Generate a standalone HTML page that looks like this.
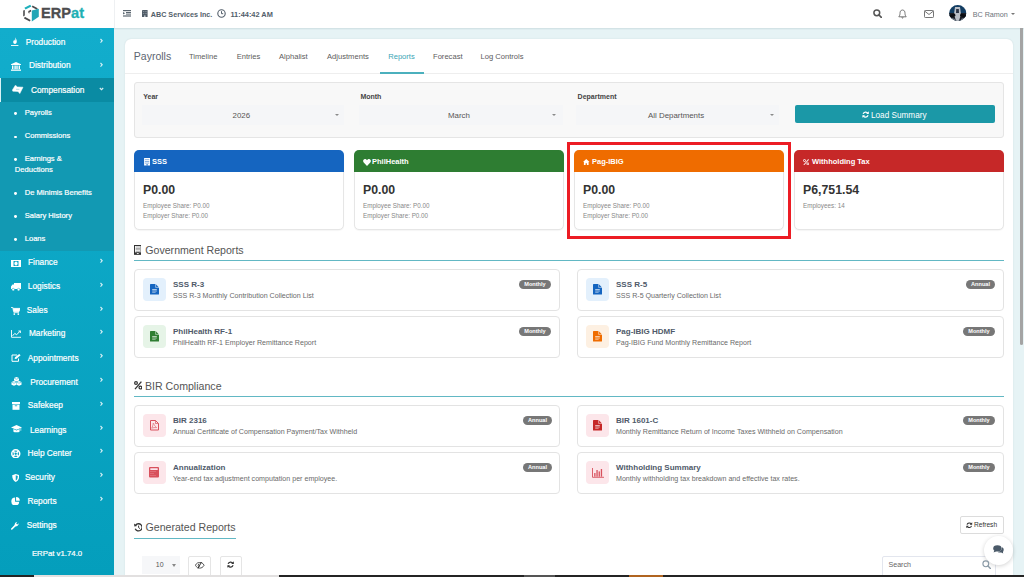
<!DOCTYPE html>
<html><head><meta charset="utf-8">
<style>
*{margin:0;padding:0;box-sizing:border-box}
html,body{width:1024px;height:577px;overflow:hidden;background:#e6f3f5;font-family:"Liberation Sans",sans-serif}
.a{position:absolute}
.t{position:absolute;white-space:nowrap;line-height:20px;height:20px}
#top{left:0;top:0;width:1024px;height:28px;background:#fff;box-shadow:0 1px 1.5px rgba(40,80,90,.13)}
#side{left:0;top:28px;width:114px;height:549px;background:linear-gradient(#12adcc,#049ebc)}
.mi{position:absolute;white-space:nowrap;line-height:20px;height:20px;color:#fff;font-size:8.3px;-webkit-text-stroke:0.2px #fff}
.si{position:absolute;white-space:nowrap;line-height:20px;height:20px;color:#fff;font-size:7.6px;-webkit-text-stroke:0.2px #fff}
.chev{position:absolute;left:98px;width:5px;height:8px}
.ic{position:absolute}
#card{left:125px;top:39px;width:888px;height:560px;background:#fff;border-radius:6px;box-shadow:0 0 1.5px rgba(60,90,100,.18)}
.tab{position:absolute;top:46.5px;white-space:nowrap;line-height:20px;height:20px;font-size:7.6px;color:#5c5c5c}
.lbl{position:absolute;white-space:nowrap;line-height:20px;height:20px;font-size:7px;font-weight:bold;color:#444}
.sel{position:absolute;top:105px;height:20px;background:#f5f6f8}
.selt{position:absolute;white-space:nowrap;line-height:19px;top:0.7px;font-size:7.9px;color:#555}
.caret{position:absolute;top:9px;width:0;height:0;border-left:2px solid transparent;border-right:2px solid transparent;border-top:2.5px solid #8a8a8a}
.sc{position:absolute;top:150px;width:210px;height:80px;background:#fff;border:1px solid #e6e6e6;border-radius:5px;box-shadow:0 1px 1px rgba(0,0,0,.04)}
.sch{position:absolute;left:-1px;top:-1px;width:210px;height:22px;border-radius:5px 5px 0 0}
.scht{position:absolute;left:17px;top:1px;line-height:20px;color:#fff;font-weight:bold;font-size:7.5px;white-space:nowrap}
.amt{position:absolute;left:8px;top:29px;line-height:20px;font-weight:bold;font-size:12.3px;color:#333;white-space:nowrap}
.sub{position:absolute;left:8px;line-height:10px;font-size:6.3px;color:#888;white-space:nowrap}
.h{position:absolute;white-space:nowrap;line-height:20px;height:20px;font-size:10.6px;color:#555}
.hl{position:absolute;height:1px;background:#62b8c4}
.rc{position:absolute;width:426px;height:41.5px;background:#fff;border:1px solid #e3e3e3;border-radius:4px}
.rc.r{width:427px}
.ib{position:absolute;left:8px;top:8px;width:23px;height:23px;border-radius:4px}
.rt{position:absolute;left:38px;top:4.6px;line-height:20px;font-weight:bold;font-size:8px;color:#4f5a6a;white-space:nowrap}
.rs{position:absolute;left:38px;top:16px;line-height:20px;font-size:7.1px;color:#6a6a6a;white-space:nowrap}
.bd{position:absolute;top:10px;height:9px;border-radius:5px;background:#777;color:#fff;font-weight:bold;font-size:5.6px;line-height:9px;text-align:center;white-space:nowrap}
</style></head><body>

<!-- content bg handled by body -->
<div id="top" class="a"></div>
<div class="a" style="left:114px;top:0;width:1px;height:28px;background:#eef0f2"></div>

<!-- logo -->
<svg class="ic" style="left:22px;top:3px" width="18" height="20" viewBox="0 0 18 20"><path d="M2.4 4.8 L8.2 1.8 L9.4 3.6 L3.5 6.4 Z" fill="#1fb0bb"/><path d="M10.6 2.5 L15.7 5.2 L14.9 6.8 L9.8 4 Z" fill="#4a4a4c"/><path d="M1.2 7.5 L2.8 7 L2.8 12.6 L1.2 13.4 Z" fill="#4a4a4c"/><path d="M2.8 13.8 L8.6 16.9 L7.8 18.5 L2 15.4 Z" fill="#4a4a4c"/><path d="M6.3 7.9 L9 6.8 L9.2 8.4 L7.4 9.2 L7.6 10.4 L6.4 10 Z" fill="#4a4a4c"/><path d="M9.8 7.5 L16.8 5.8 L16.8 13.8 L9.8 18.5 Z" fill="#23a6b6"/></svg>
<div class="t" style="left:41px;top:3px;font-size:14.6px;font-weight:bold;color:#4d4d4f;-webkit-text-stroke:0.3px #4d4d4f">ERP<span style="color:#1fb0b4;-webkit-text-stroke:0.3px #1fb0b4">at</span></div>

<!-- top bar left -->
<svg class="ic" style="left:123px;top:10px" width="8" height="6.6" viewBox="0 0 8 6.6"><g fill="#5b6670"><rect x="0" y="0" width="8" height="1.2"/><rect x="3" y="2" width="5" height="1"/><rect x="3" y="3.6" width="5" height="1"/><rect x="0" y="5.4" width="8" height="1.2"/><path d="M0 2 L2.2 3.3 L0 4.6 Z"/></g></svg>
<svg class="ic" style="left:142.4px;top:10px" width="5.6" height="7.4" viewBox="0 0 5.6 7.4"><rect x="0" y="0" width="5.6" height="7.4" rx="0.4" fill="#505c68"/><g fill="#8a949e"><rect x="0.9" y="1.1" width="1.4" height="0.9"/><rect x="3.3" y="1.1" width="1.4" height="0.9"/><rect x="0.9" y="3" width="1.4" height="0.9"/><rect x="3.3" y="3" width="1.4" height="0.9"/></g><rect x="2.1" y="5.4" width="1.4" height="2" fill="#c8ced4"/></svg>
<div class="t" style="left:150.8px;top:4.5px;font-size:7.2px;font-weight:bold;color:#525e6a">ABC Services Inc.</div>
<svg class="ic" style="left:217px;top:9px" width="9" height="9" viewBox="0 0 9 9"><circle cx="4.5" cy="4.5" r="3.7" fill="none" stroke="#525e6a" stroke-width="1.1"/><path d="M4.5 2.2 V4.7 H6.2" fill="none" stroke="#525e6a" stroke-width="1"/></svg>
<div class="t" style="left:230.4px;top:4.5px;font-size:7.4px;font-weight:bold;color:#525e6a">11:44:42 AM</div>

<!-- top bar right -->
<svg class="ic" style="left:873px;top:9px" width="9" height="9" viewBox="0 0 9 9"><circle cx="3.8" cy="3.8" r="2.9" fill="none" stroke="#555" stroke-width="1.5"/><path d="M6 6 L8.3 8.3" stroke="#555" stroke-width="1.7" stroke-linecap="round"/></svg>
<svg class="ic" style="left:898px;top:9px" width="9" height="10" viewBox="0 0 9 10"><path d="M4.5 1 C2.5 1 2 2.8 2 4.5 C2 6.5 1 7.3 0.8 7.8 H8.2 C8 7.3 7 6.5 7 4.5 C7 2.8 6.5 1 4.5 1 Z" fill="none" stroke="#666" stroke-width="0.9"/><path d="M3.6 8.6 A1 1 0 0 0 5.4 8.6" fill="#666" stroke="#666" stroke-width="0.6"/></svg>
<svg class="ic" style="left:924px;top:10px" width="10" height="8" viewBox="0 0 10 8"><rect x="0.5" y="0.5" width="9" height="7" rx="0.8" fill="none" stroke="#666" stroke-width="0.9"/><path d="M0.8 1.2 L5 4.5 L9.2 1.2" fill="none" stroke="#666" stroke-width="0.9"/></svg>
<svg class="ic" style="left:949px;top:5px" width="17.5" height="16" viewBox="0 0 17.5 16"><defs><clipPath id="av"><ellipse cx="8.75" cy="8" rx="8.6" ry="7.9"/></clipPath></defs><g clip-path="url(#av)"><rect x="0" y="0" width="17.5" height="16" fill="#123d62"/><rect x="0" y="8" width="17.5" height="8" fill="#1c1f26"/><path d="M6 2 L11 2 L12 9 L10 16 L7 16 L5 9 Z" fill="#b9bec6"/><path d="M7.2 4 L9.8 4 L10 8 L7 8 Z" fill="#2a3344"/><path d="M0 10 L6 8.5 L6.5 11 L0 13 Z M17.5 10 L11.5 8.5 L11 11 L17.5 13 Z" fill="#0b0d12"/><path d="M2 13 L6 14 L5 16 L1 16 Z M15 13 L12 14 L13 16 L16 16 Z" fill="#8d97a6"/></g></svg>
<div class="t" style="left:972.7px;top:4.5px;font-size:7.2px;color:#6c737b">BC Ramon</div>
<div class="a" style="left:1011px;top:13px;width:0;height:0;border-left:2.3px solid transparent;border-right:2.3px solid transparent;border-top:2.6px solid #777"></div>

<!-- sidebar -->
<div id="side" class="a"></div>
<div class="a" style="left:0;top:78px;width:114px;height:24px;background:#0a8ba3"></div>
<div class="a" style="left:0;top:78px;width:1px;height:24px;background:#d9f2f6"></div>
<div class="a" style="left:0;top:102px;width:114px;height:149px;background:#1299b3"></div>

<div class="mi" style="left:25.7px;top:31.5px">Production</div>
<div class="mi" style="left:29px;top:55.4px">Distribution</div>
<div class="mi" style="left:30.9px;top:79.7px">Compensation</div>
<div class="si" style="left:24.8px;top:102.6px">Payrolls</div>
<div class="si" style="left:24.7px;top:126px">Commissions</div>
<div class="si" style="left:24.7px;top:148.7px">Earnings &amp;</div>
<div class="si" style="left:14.8px;top:160.2px">Deductions</div>
<div class="si" style="left:24.7px;top:183px">De Minimis Benefits</div>
<div class="si" style="left:24.7px;top:205.7px">Salary History</div>
<div class="si" style="left:24.7px;top:229px">Loans</div>
<div class="mi" style="left:28px;top:252.2px">Finance</div>
<div class="mi" style="left:27.8px;top:275.7px">Logistics</div>
<div class="mi" style="left:26.8px;top:299.9px">Sales</div>
<div class="mi" style="left:28.9px;top:323.3px">Marketing</div>
<div class="mi" style="left:27.8px;top:347.5px">Appointments</div>
<div class="mi" style="left:30.2px;top:371.7px">Procurement</div>
<div class="mi" style="left:27.8px;top:395px">Safekeep</div>
<div class="mi" style="left:30px;top:419.5px">Learnings</div>
<div class="mi" style="left:27.5px;top:442.7px">Help Center</div>
<div class="mi" style="left:25px;top:467.2px">Security</div>
<div class="mi" style="left:27.5px;top:491.2px">Reports</div>
<div class="mi" style="left:26.7px;top:514.8px">Settings</div>
<div class="si" style="left:31.9px;top:544.3px;font-size:7.8px">ERPat v1.74.0</div>

<!-- bullets -->
<div class="a" style="left:14.4px;top:112.2px;width:2.8px;height:2.8px;border-radius:50%;background:#fff"></div>
<div class="a" style="left:14.4px;top:135.6px;width:2.8px;height:2.8px;border-radius:50%;background:#fff"></div>
<div class="a" style="left:14.4px;top:158.2px;width:2.8px;height:2.8px;border-radius:50%;background:#fff"></div>
<div class="a" style="left:14.4px;top:191.9px;width:2.8px;height:2.8px;border-radius:50%;background:#fff"></div>
<div class="a" style="left:14.4px;top:215.3px;width:2.8px;height:2.8px;border-radius:50%;background:#fff"></div>
<div class="a" style="left:14.4px;top:237.9px;width:2.8px;height:2.8px;border-radius:50%;background:#fff"></div>

<!-- chevrons -->
<svg class="chev" style="top:36.5px;left:99px" viewBox="0 0 5 8"><path d="M1.5 2 L3.2 3.8 L1.5 5.6" fill="none" stroke="#fff" stroke-opacity="0.85" stroke-width="1.1"/></svg>
<svg class="chev" style="top:60.5px;left:99px" viewBox="0 0 5 8"><path d="M1.5 2 L3.2 3.8 L1.5 5.6" fill="none" stroke="#fff" stroke-opacity="0.85" stroke-width="1.1"/></svg>
<svg class="chev" style="top:84.5px;left:99px" viewBox="0 0 5 8"><path d="M0.8 3 L2.5 4.7 L4.2 3" fill="none" stroke="#fff" stroke-opacity="0.85" stroke-width="1.1"/></svg>
<svg class="chev" style="top:257px;left:99px" viewBox="0 0 5 8"><path d="M1.5 2 L3.2 3.8 L1.5 5.6" fill="none" stroke="#fff" stroke-opacity="0.85" stroke-width="1.1"/></svg>
<svg class="chev" style="top:280.5px;left:99px" viewBox="0 0 5 8"><path d="M1.5 2 L3.2 3.8 L1.5 5.6" fill="none" stroke="#fff" stroke-opacity="0.85" stroke-width="1.1"/></svg>
<svg class="chev" style="top:304.5px;left:99px" viewBox="0 0 5 8"><path d="M1.5 2 L3.2 3.8 L1.5 5.6" fill="none" stroke="#fff" stroke-opacity="0.85" stroke-width="1.1"/></svg>
<svg class="chev" style="top:328px;left:99px" viewBox="0 0 5 8"><path d="M1.5 2 L3.2 3.8 L1.5 5.6" fill="none" stroke="#fff" stroke-opacity="0.85" stroke-width="1.1"/></svg>
<svg class="chev" style="top:352px;left:99px" viewBox="0 0 5 8"><path d="M1.5 2 L3.2 3.8 L1.5 5.6" fill="none" stroke="#fff" stroke-opacity="0.85" stroke-width="1.1"/></svg>
<svg class="chev" style="top:376px;left:99px" viewBox="0 0 5 8"><path d="M1.5 2 L3.2 3.8 L1.5 5.6" fill="none" stroke="#fff" stroke-opacity="0.85" stroke-width="1.1"/></svg>
<svg class="chev" style="top:399.5px;left:99px" viewBox="0 0 5 8"><path d="M1.5 2 L3.2 3.8 L1.5 5.6" fill="none" stroke="#fff" stroke-opacity="0.85" stroke-width="1.1"/></svg>
<svg class="chev" style="top:423.5px;left:99px" viewBox="0 0 5 8"><path d="M1.5 2 L3.2 3.8 L1.5 5.6" fill="none" stroke="#fff" stroke-opacity="0.85" stroke-width="1.1"/></svg>
<svg class="chev" style="top:447px;left:99px" viewBox="0 0 5 8"><path d="M1.5 2 L3.2 3.8 L1.5 5.6" fill="none" stroke="#fff" stroke-opacity="0.85" stroke-width="1.1"/></svg>
<svg class="chev" style="top:471px;left:99px" viewBox="0 0 5 8"><path d="M1.5 2 L3.2 3.8 L1.5 5.6" fill="none" stroke="#fff" stroke-opacity="0.85" stroke-width="1.1"/></svg>
<svg class="chev" style="top:495px;left:99px" viewBox="0 0 5 8"><path d="M1.5 2 L3.2 3.8 L1.5 5.6" fill="none" stroke="#fff" stroke-opacity="0.85" stroke-width="1.1"/></svg>


<svg class="ic" style="left:11px;top:37px" width="8" height="9" viewBox="0 0 8 9"><path d="M4 0.3 C5 1.8 5.8 2.6 5.8 4.6 C5.8 6.2 5 7 4 7 C3 7 2.2 6.2 2.2 5 C2.2 3.8 3 3.4 3.2 2.4 C3.8 3 3.9 3.6 3.9 4.2 C4.6 3.2 4.5 1.5 4 0.3 Z" fill="#fff"/><rect x="0" y="8" width="7.4" height="0.9" fill="#fff"/></svg>
<svg class="ic" style="left:11px;top:61.5px" width="10" height="9" viewBox="0 0 10 9"><path d="M5 0 L10 2.2 V3 H0 V2.2 Z" fill="#fff"/><rect x="1" y="3.5" width="1.4" height="3.6" fill="#fff"/><rect x="3.4" y="3.5" width="1.4" height="3.6" fill="#fff"/><rect x="5.3" y="3.5" width="1.4" height="3.6" fill="#fff"/><rect x="7.6" y="3.5" width="1.4" height="3.6" fill="#fff"/><rect x="0" y="7.5" width="10" height="1.3" fill="#fff"/></svg>
<svg class="ic" style="left:12px;top:85px" width="12" height="9" viewBox="0 0 12 9"><path d="M0.4 5 L3.4 0.2 L5.4 1.9 L11 2.2 L7.8 8.6 L6 6.4 L0.8 6.2 Z" fill="#fff" stroke="#fff" stroke-width="0.5" stroke-linejoin="round"/><path d="M4 4.3 H7.4" stroke="#7fc6d4" stroke-width="0.6"/></svg>
<svg class="ic" style="left:11px;top:259.5px" width="10" height="7" viewBox="0 0 10 7"><rect x="0.5" y="0.5" width="9" height="6" fill="none" stroke="#fff" stroke-width="1"/><rect x="0.5" y="0.5" width="2" height="6" fill="#fff"/><rect x="7.5" y="0.5" width="2" height="6" fill="#fff"/><ellipse cx="5" cy="3.5" rx="1.6" ry="2" fill="#fff"/></svg>
<svg class="ic" style="left:11px;top:283px" width="10" height="8" viewBox="0 0 10 8"><path d="M3 0 H10 V6 H3 Z M0 3.5 L1.5 1.6 H3 V6 H0 Z" fill="#fff"/><circle cx="2.2" cy="6.6" r="1.3" fill="#fff" stroke="#0ea5c3" stroke-width="0.5"/><circle cx="7.6" cy="6.6" r="1.3" fill="#fff" stroke="#0ea5c3" stroke-width="0.5"/></svg>
<svg class="ic" style="left:11px;top:306.5px" width="9" height="8" viewBox="0 0 9 8"><path d="M0 0.4 H1.8 L2.6 4.6 H8 L9 1.4 H2.2" fill="none" stroke="#fff" stroke-width="0.9"/><path d="M2 1.4 H9 L8 4.6 H2.6 Z" fill="#fff"/><rect x="2.6" y="5.3" width="5.4" height="0.8" fill="#fff"/><circle cx="3.3" cy="7.1" r="0.9" fill="#fff"/><circle cx="7.3" cy="7.1" r="0.9" fill="#fff"/></svg>
<svg class="ic" style="left:11px;top:330px" width="10" height="8" viewBox="0 0 10 8"><path d="M0.5 0 V7.3 H10" fill="none" stroke="#fff" stroke-width="0.9"/><path d="M1.6 5.8 L3.8 3.4 L5.6 4.8 L9 1.2" fill="none" stroke="#fff" stroke-width="1"/><path d="M7.4 1 H9.4 V3" fill="none" stroke="#fff" stroke-opacity="0.85" stroke-width="1.1"/></svg>
<svg class="ic" style="left:11px;top:353.5px" width="10" height="8" viewBox="0 0 10 8"><path d="M6 1 H1 V7.3 H7.5 V4.5" fill="none" stroke="#fff" stroke-width="1"/><path d="M3.6 4.8 L4 3.2 L8.2 0 L9.6 1.2 L5.2 5 Z" fill="#fff"/></svg>
<svg class="ic" style="left:11px;top:376.8px" width="11" height="9" viewBox="0 0 11 9"><path d="M5.5 0 L8 1 V3.6 L5.5 4.6 L3 3.6 V1 Z" fill="#fff"/><path d="M3 4 L5.4 5 V7.8 L3 8.8 L0.5 7.8 V5 Z" fill="#fff"/><path d="M8 4 L10.5 5 V7.8 L8 8.8 L5.6 7.8 V5 Z" fill="#fff"/><path d="M3 1.2 L5.5 2.2 L8 1.2 M0.5 5.2 L3 6.2 L5.4 5.2 M5.6 5.2 L8 6.2 L10.5 5.2" fill="none" stroke="#0ea5c3" stroke-width="0.5"/></svg>
<svg class="ic" style="left:11.7px;top:401.5px" width="8" height="8" viewBox="0 0 8 8"><rect x="0" y="0" width="8" height="2.1" fill="#fff"/><rect x="0.5" y="2.6" width="7" height="5.2" fill="#fff"/><rect x="2.8" y="3.4" width="2.4" height="0.8" fill="#0ea5c3"/></svg>
<svg class="ic" style="left:11px;top:425px" width="11" height="8" viewBox="0 0 11 8"><path d="M5.5 0 L11 2.4 L5.5 4.8 L0 2.4 Z" fill="#fff"/><path d="M2.4 4 V6.4 C3.5 7.6 7.5 7.6 8.6 6.4 V4 L5.5 5.4 Z" fill="#fff"/><path d="M9.8 2.8 V5.8" stroke="#fff" stroke-width="0.6"/></svg>
<svg class="ic" style="left:11px;top:448.7px" width="9.5" height="9.5" viewBox="0 0 10 10"><circle cx="5" cy="5" r="4.2" fill="none" stroke="#fff" stroke-width="1.6"/><circle cx="5" cy="5" r="1.7" fill="none" stroke="#fff" stroke-width="1"/><path d="M2 2 L3.8 3.8 M8 2 L6.2 3.8 M2 8 L3.8 6.2 M8 8 L6.2 6.2" stroke="#fff" stroke-width="1.6"/></svg>
<svg class="ic" style="left:11.7px;top:473.5px" width="7.5" height="8" viewBox="0 0 7.5 8"><path d="M3.75 0 L7.3 1.2 C7.3 5 6 6.8 3.75 8 C1.5 6.8 0.2 5 0.2 1.2 Z" fill="#fff"/><path d="M3.75 1.3 L5.8 2 C5.8 4.6 5 5.8 3.75 6.6 Z" fill="#0ea5c3"/></svg>
<svg class="ic" style="left:11px;top:496.5px" width="9.5" height="8.5" viewBox="0 0 10 9"><path d="M4.3 0.6 A4.2 4.2 0 1 0 8.7 5 H4.3 Z" fill="#fff"/><path d="M5.3 0 A4 4 0 0 1 9.3 4 H5.3 Z" fill="#fff"/></svg>
<svg class="ic" style="left:11px;top:520.5px" width="8.5" height="9" viewBox="0 0 9 9"><path d="M0.8 8.2 L4.4 4.6" stroke="#fff" stroke-width="1.7" stroke-linecap="round"/><path d="M4 4.8 C3.4 3 4.4 0.8 6.8 0.6 L5.4 2.2 L6.6 3.4 L8.2 2 C8.2 4.4 6.2 5.6 4.4 5.2 Z" fill="#fff"/></svg>


<!-- scrollbar -->
<div class="a" style="left:1019.8px;top:28px;width:2.9px;height:316.6px;background:#a4a4a4;border-radius:0 0 1.5px 1.5px"></div>

<!-- main card -->
<div id="card" class="a"></div>
<div class="t" style="left:133.8px;top:46px;font-size:10.5px;color:#5d6571">Payrolls</div>
<div class="tab" style="left:189px">Timeline</div>
<div class="tab" style="left:236.7px">Entries</div>
<div class="tab" style="left:279px">Alphalist</div>
<div class="tab" style="left:327px">Adjustments</div>
<div class="tab" style="left:388.2px;color:#3aa6b6">Reports</div>
<div class="tab" style="left:433px">Forecast</div>
<div class="tab" style="left:480.5px">Log Controls</div>
<div class="a" style="left:125px;top:73px;width:888px;height:1px;background:#eeeeee"></div>
<div class="a" style="left:380px;top:72px;width:44px;height:2px;background:#4bb0bd"></div>

<!-- filter -->
<div class="a" style="left:134px;top:82px;width:870px;height:56px;background:#f8f8f8;border:1px solid #e5e5e5;border-radius:3px"></div>
<div class="lbl" style="left:143.3px;top:87px">Year</div>
<div class="lbl" style="left:360.4px;top:87px">Month</div>
<div class="lbl" style="left:577.6px;top:87px">Department</div>
<div class="sel" style="left:142px;width:202px"><div class="selt" style="left:90.5px">2026</div><div class="caret" style="left:193px"></div></div>
<div class="sel" style="left:359px;width:204px"><div class="selt" style="left:89px">March</div><div class="caret" style="left:193px"></div></div>
<div class="sel" style="left:576px;width:203px"><div class="selt" style="left:72px">All Departments</div><div class="caret" style="left:193.5px"></div></div>
<div class="a" style="left:795px;top:105px;width:200px;height:18px;background:#1b98a7;border-radius:2px"></div>
<div class="t" style="left:871px;top:105.5px;font-size:8.2px;color:#fff">Load Summary</div>
<svg class="ic" style="left:862px;top:110.8px" width="7.2" height="7.2" viewBox="0 0 8 8"><path d="M6.6 2.6 A3 3 0 0 0 1.2 3.2" fill="none" stroke="#fff" stroke-width="1.3"/><path d="M7.6 0.4 V3.4 H4.6 Z" fill="#fff"/><path d="M1.4 5.4 A3 3 0 0 0 6.8 4.8" fill="none" stroke="#fff" stroke-width="1.3"/><path d="M0.4 7.6 V4.6 H3.4 Z" fill="#fff"/></svg>

<!-- summary cards -->
<div class="sc" style="left:134px"><div class="sch" style="background:#1565c0"></div><div class="scht">SSS</div><svg class="ic" style="left:8.5px;top:7px" width="6.2" height="7.5" viewBox="0 0 6 7.5"><rect x="0" y="0" width="6" height="7.5" fill="#fff"/><rect x="0.8" y="1.6" width="4.4" height="0.5" fill="#1565c0"/><rect x="0.8" y="3.2" width="4.4" height="0.5" fill="#1565c0"/><rect x="0.8" y="4.8" width="4.4" height="0.5" fill="#1565c0"/><rect x="2.4" y="6.2" width="1.2" height="1.3" fill="#1565c0"/></svg><div class="amt">P0.00</div><div class="sub" style="top:49.5px">Employee Share: P0.00</div><div class="sub" style="top:60px">Employer Share: P0.00</div></div>
<div class="sc" style="left:354px"><div class="sch" style="background:#2e7d32"></div><div class="scht">PhilHealth</div><svg class="ic" style="left:8px;top:7.5px" width="8" height="7" viewBox="0 0 8 7"><path d="M4 7 L0.7 3.6 C-0.4 2.4 0.1 0.2 2 0.1 C3 0.1 3.6 0.7 4 1.3 C4.4 0.7 5 0.1 6 0.1 C7.9 0.2 8.4 2.4 7.3 3.6 Z" fill="#fff"/></svg><div class="amt">P0.00</div><div class="sub" style="top:49.5px">Employee Share: P0.00</div><div class="sub" style="top:60px">Employer Share: P0.00</div></div>
<div class="sc" style="left:574px"><div class="sch" style="background:#ef6c00"></div><div class="scht">Pag-IBIG</div><svg class="ic" style="left:8px;top:8px" width="6.5" height="6" viewBox="0 0 6.5 6"><path d="M3.25 0 L6.5 3 H5.6 V6 H3.9 V4.2 H2.6 V6 H0.9 V3 H0 Z" fill="#fff"/></svg><div class="amt">P0.00</div><div class="sub" style="top:49.5px">Employee Share: P0.00</div><div class="sub" style="top:60px">Employer Share: P0.00</div></div>
<div class="sc" style="left:794px"><div class="sch" style="background:#c62828"></div><div class="scht">Withholding Tax</div><svg class="ic" style="left:8px;top:7.8px" width="6.4" height="6.4" viewBox="0 0 6.4 6.4"><circle cx="1.5" cy="1.5" r="1.05" fill="none" stroke="#fff" stroke-width="0.9"/><circle cx="4.9" cy="4.9" r="1.05" fill="none" stroke="#fff" stroke-width="0.9"/><path d="M5.6 0.4 L0.8 6" stroke="#fff" stroke-opacity="0.85" stroke-width="1.1"/></svg><div class="amt">P6,751.54</div><div class="sub" style="top:49.5px">Employees: 14</div></div>
<div class="a" style="left:567px;top:142px;width:224px;height:97px;border:3px solid #ec1c24"></div>

<!-- gov reports -->
<svg class="ic" style="left:133.8px;top:245px" width="7.6" height="9.8" viewBox="0 0 7.6 9.8"><rect x="0.5" y="0.5" width="6.6" height="8.8" fill="none" stroke="#333" stroke-width="1"/><g fill="#777"><rect x="1.6" y="1.7" width="4.4" height="0.6"/><rect x="1.6" y="3.1" width="4.4" height="0.6"/><rect x="1.6" y="4.5" width="4.4" height="0.6"/><rect x="1.6" y="5.9" width="4.4" height="0.6"/></g><path d="M0.5 9.3 V7.6 Q3.8 6.4 7.1 7.6 V9.3 Z" fill="#333"/><ellipse cx="3.8" cy="8.3" rx="1.1" ry="0.6" fill="#fff"/></svg>
<svg class="ic" style="left:133.8px;top:381.4px" width="8.4" height="8.6" viewBox="0 0 8.4 8.6"><circle cx="2" cy="2" r="1.4" fill="none" stroke="#333" stroke-width="1.2"/><circle cx="6.4" cy="6.6" r="1.4" fill="none" stroke="#333" stroke-width="1.2"/><path d="M7.4 0.6 L1 8.2" stroke="#333" stroke-width="1.3"/></svg>
<svg class="ic" style="left:134px;top:523px" width="8.4" height="8.6" viewBox="0 0 8.4 8.6"><path d="M1.6 2.2 A3.6 3.6 0 1 1 1.2 5.8" fill="none" stroke="#333" stroke-width="1.3"/><path d="M0 0.6 L0.4 3.6 L3.2 3 Z" fill="#333"/><path d="M4.6 2.6 V4.6 L5.9 5.6" fill="none" stroke="#333" stroke-width="1"/></svg>

<div class="h" style="left:145.3px;top:240px">Government Reports</div>
<div class="hl" style="left:134px;top:260px;width:870px"></div>
<div class="rc" style="left:134px;top:269px"><div class="ib" style="background:#e3f0fc"><svg class="ic" style="left:6.5px;top:6px" width="9" height="10.5" viewBox="0 0 9 10.5"><path d="M0 0.6 Q0 0 0.6 0 H5.6 L9 3.4 V9.9 Q9 10.5 8.4 10.5 H0.6 Q0 10.5 0 9.9 Z" fill="#1565c0"/><path d="M5.6 0 V3.4 H9" fill="none" stroke="#fff" stroke-width="0.5"/><rect x="2.2" y="5" width="4.6" height="0.8" fill="#fff" opacity="0.8"/><rect x="2.2" y="6.6" width="4.6" height="0.8" fill="#fff" opacity="0.8"/><rect x="2.2" y="8.2" width="3.4" height="0.7" fill="#fff" opacity="0.6"/></svg></div><div class="rt">SSS R-3</div><div class="rs">SSS R-3 Monthly Contribution Collection List</div><div class="bd" style="left:384px;width:32px">Monthly</div></div>
<div class="rc" style="left:134px;top:316px"><div class="ib" style="background:#e6f4e7"><svg class="ic" style="left:6.5px;top:6px" width="9" height="10.5" viewBox="0 0 9 10.5"><path d="M0 0.6 Q0 0 0.6 0 H5.6 L9 3.4 V9.9 Q9 10.5 8.4 10.5 H0.6 Q0 10.5 0 9.9 Z" fill="#2e7d32"/><path d="M5.6 0 V3.4 H9" fill="none" stroke="#fff" stroke-width="0.5"/><rect x="2.2" y="5" width="4.6" height="0.8" fill="#fff" opacity="0.8"/><rect x="2.2" y="6.6" width="4.6" height="0.8" fill="#fff" opacity="0.8"/><rect x="2.2" y="8.2" width="3.4" height="0.7" fill="#fff" opacity="0.6"/></svg></div><div class="rt">PhilHealth RF-1</div><div class="rs">PhilHealth RF-1 Employer Remittance Report</div><div class="bd" style="left:384px;width:32px">Monthly</div></div>
<div class="rc r" style="left:577px;top:269px"><div class="ib" style="background:#e3f0fc"><svg class="ic" style="left:6.5px;top:6px" width="9" height="10.5" viewBox="0 0 9 10.5"><path d="M0 0.6 Q0 0 0.6 0 H5.6 L9 3.4 V9.9 Q9 10.5 8.4 10.5 H0.6 Q0 10.5 0 9.9 Z" fill="#1565c0"/><path d="M5.6 0 V3.4 H9" fill="none" stroke="#fff" stroke-width="0.5"/><rect x="2.2" y="5" width="4.6" height="0.8" fill="#fff" opacity="0.8"/><rect x="2.2" y="6.6" width="4.6" height="0.8" fill="#fff" opacity="0.8"/><rect x="2.2" y="8.2" width="3.4" height="0.7" fill="#fff" opacity="0.6"/></svg></div><div class="rt">SSS R-5</div><div class="rs">SSS R-5 Quarterly Collection List</div><div class="bd" style="left:388px;width:29px">Annual</div></div>
<div class="rc r" style="left:577px;top:316px"><div class="ib" style="background:#fdf0e2"><svg class="ic" style="left:6.5px;top:6px" width="9" height="10.5" viewBox="0 0 9 10.5"><path d="M0 0.6 Q0 0 0.6 0 H5.6 L9 3.4 V9.9 Q9 10.5 8.4 10.5 H0.6 Q0 10.5 0 9.9 Z" fill="#ef6c00"/><path d="M5.6 0 V3.4 H9" fill="none" stroke="#fff" stroke-width="0.5"/><rect x="2.2" y="5" width="4.6" height="0.8" fill="#fff" opacity="0.8"/><rect x="2.2" y="6.6" width="4.6" height="0.8" fill="#fff" opacity="0.8"/><rect x="2.2" y="8.2" width="3.4" height="0.7" fill="#fff" opacity="0.6"/></svg></div><div class="rt">Pag-IBIG HDMF</div><div class="rs">Pag-IBIG Fund Monthly Remittance Report</div><div class="bd" style="left:385px;width:32px">Monthly</div></div>

<!-- BIR -->
<div class="h" style="left:145px;top:375.7px">BIR Compliance</div>
<div class="hl" style="left:134px;top:395.5px;width:870px"></div>
<div class="rc" style="left:134px;top:405px"><div class="ib" style="background:#fce6ea"><svg class="ic" style="left:6.5px;top:6px" width="9" height="10.5" viewBox="0 0 9 10.5"><path d="M0.5 0.5 H5.5 L8.5 3.5 V10 H0.5 Z" fill="none" stroke="#d8505c" stroke-width="1"/><path d="M5.5 0.5 V3.5 H8.5" fill="none" stroke="#d8505c" stroke-width="0.7"/><path d="M3.2 3 C3 5 2.6 7 1.6 8.2 C3 7.6 5 7.4 6.6 7.6 C5.4 6.6 4 5 3.6 3.2" fill="none" stroke="#d8505c" stroke-width="0.6"/></svg></div><div class="rt">BIR 2316</div><div class="rs">Annual Certificate of Compensation Payment/Tax Withheld</div><div class="bd" style="left:388px;width:29px">Annual</div></div>
<div class="rc" style="left:134px;top:452px"><div class="ib" style="background:#fce6ea"><svg class="ic" style="left:6px;top:6.3px" width="10" height="10.5" viewBox="0 0 10 10.5"><rect x="0" y="0" width="10" height="10.5" rx="1" fill="#d8505c"/><rect x="1.2" y="1.3" width="7.6" height="1.6" rx="0.4" fill="#fce4ec"/><g fill="#fce4ec"><circle cx="2" cy="4.6" r="0.45"/><circle cx="4" cy="4.6" r="0.45"/><circle cx="6" cy="4.6" r="0.45"/><circle cx="2" cy="6.6" r="0.45"/><circle cx="4" cy="6.6" r="0.45"/><circle cx="2" cy="8.6" r="0.45"/><circle cx="4" cy="8.6" r="0.45"/><circle cx="6" cy="8.6" r="0.45"/></g></svg></div><div class="rt">Annualization</div><div class="rs">Year-end tax adjustment computation per employee.</div><div class="bd" style="left:388px;width:29px">Annual</div></div>
<div class="rc r" style="left:577px;top:405px"><div class="ib" style="background:#fce6ea"><svg class="ic" style="left:6.5px;top:6px" width="9" height="10.5" viewBox="0 0 9 10.5"><path d="M0 0.6 Q0 0 0.6 0 H5.6 L9 3.4 V9.9 Q9 10.5 8.4 10.5 H0.6 Q0 10.5 0 9.9 Z" fill="#c62828"/><path d="M5.6 0 V3.4 H9" fill="none" stroke="#fff" stroke-width="0.5"/><rect x="2.2" y="5" width="4.6" height="0.8" fill="#fff" opacity="0.8"/><rect x="2.2" y="6.6" width="4.6" height="0.8" fill="#fff" opacity="0.8"/><rect x="2.2" y="8.2" width="3.4" height="0.7" fill="#fff" opacity="0.6"/></svg></div><div class="rt">BIR 1601-C</div><div class="rs">Monthly Remittance Return of Income Taxes Withheld on Compensation</div><div class="bd" style="left:385px;width:32px">Monthly</div></div>
<div class="rc r" style="left:577px;top:452px"><div class="ib" style="background:#fce6ea"><svg class="ic" style="left:5.5px;top:6.5px" width="12" height="10" viewBox="0 0 12 10"><path d="M0.5 0 V9.3 H12" fill="none" stroke="#d8505c" stroke-width="0.9"/><rect x="2.2" y="5" width="1.3" height="3.7" fill="#d8505c"/><rect x="4.4" y="2" width="1.3" height="6.7" fill="#d8505c"/><rect x="6.6" y="3.4" width="1.3" height="5.3" fill="#d8505c"/><rect x="8.8" y="1" width="1.3" height="7.7" fill="#d8505c"/></svg></div><div class="rt">Withholding Summary</div><div class="rs">Monthly withholding tax breakdown and effective tax rates.</div><div class="bd" style="left:385px;width:32px">Monthly</div></div>

<!-- generated -->
<div class="h" style="left:145.5px;top:517px">Generated Reports</div>
<div class="hl" style="left:134px;top:538px;width:101.5px"></div>
<div class="a" style="left:960px;top:516px;width:44px;height:18px;border:1px solid #dcdcdc;border-radius:2px;background:#fff"></div>
<div class="t" style="left:974px;top:515px;font-size:6.6px;color:#333">Refresh</div>
<div class="a" style="left:142px;top:556px;width:38px;height:18px;background:#f6f7f9"></div>
<div class="t" style="left:155.8px;top:555px;font-size:7px;color:#555">10</div>
<div class="a" style="left:172px;top:564px;width:0;height:0;border-left:2px solid transparent;border-right:2px solid transparent;border-top:3px solid #888"></div>
<div class="a" style="left:188px;top:556px;width:23px;height:22px;border:1px solid #e5e5e5;border-radius:2px"></div>
<div class="a" style="left:220px;top:556px;width:22px;height:22px;border:1px solid #e5e5e5;border-radius:2px"></div>
<div class="a" style="left:882px;top:556px;width:114px;height:22px;border:1px solid #e3e6ee;border-radius:2px"></div>
<div class="t" style="left:888.5px;top:555px;font-size:7.1px;color:#666">Search</div>
<div class="a" style="left:984px;top:536px;width:29px;height:29px;border-radius:50%;background:#fff;box-shadow:0 1px 4px rgba(0,0,0,.18)"></div>


<svg class="ic" style="left:966px;top:521.5px" width="6.5" height="6.5" viewBox="0 0 8 8"><path d="M6.6 2.6 A3 3 0 0 0 1.2 3.2" fill="none" stroke="#333" stroke-width="1.3"/><path d="M7.6 0.4 V3.4 H4.6 Z" fill="#333"/><path d="M1.4 5.4 A3 3 0 0 0 6.8 4.8" fill="none" stroke="#333" stroke-width="1.3"/><path d="M0.4 7.6 V4.6 H3.4 Z" fill="#333"/></svg>
<svg class="ic" style="left:227px;top:561.3px" width="7.2" height="7.2" viewBox="0 0 8 8"><path d="M6.6 2.6 A3 3 0 0 0 1.2 3.2" fill="none" stroke="#333" stroke-width="1.3"/><path d="M7.6 0.4 V3.4 H4.6 Z" fill="#333"/><path d="M1.4 5.4 A3 3 0 0 0 6.8 4.8" fill="none" stroke="#333" stroke-width="1.3"/><path d="M0.4 7.6 V4.6 H3.4 Z" fill="#333"/></svg>
<svg class="ic" style="left:195px;top:562px" width="9.5" height="6.5" viewBox="0 0 9.5 6.5"><path d="M0.4 3.25 C1.6 1 3.2 0.4 4.75 0.4 C6.3 0.4 7.9 1 9.1 3.25 C7.9 5.5 6.3 6.1 4.75 6.1 C3.2 6.1 1.6 5.5 0.4 3.25 Z" fill="none" stroke="#444" stroke-width="0.9"/><path d="M4 1.6 L3.2 3.6 L4.2 5" fill="none" stroke="#444" stroke-width="1"/><path d="M6.4 0.2 L3 6.4" stroke="#222" stroke-width="0.9"/></svg>
<svg class="ic" style="left:981.5px;top:559.8px" width="9" height="9" viewBox="0 0 9 9"><circle cx="3.8" cy="3.8" r="2.9" fill="none" stroke="#8a9aa6" stroke-width="1.1"/><path d="M6 6 L8.4 8.4" stroke="#8a9aa6" stroke-width="1.4" stroke-linecap="round"/></svg>
<svg class="ic" style="left:993px;top:545px" width="11" height="9.5" viewBox="0 0 11 9.5"><ellipse cx="4.4" cy="3.4" rx="4.2" ry="3.1" fill="#4b5a69"/><path d="M1.2 5.4 L0.6 7.4 L3.2 6.2 Z" fill="#4b5a69"/><path d="M8.9 2.3 C10.5 3 11 4.2 10.6 5.4 C10.2 6.4 9.6 7 10.3 8.6 L8.2 7.4 C7 7.8 5.6 7.6 4.8 6.9 C7.2 6.6 9.2 5 8.9 2.3 Z" fill="#4b5a69"/></svg>

<!-- bottom strip -->
<div class="a" style="left:0;top:575px;width:1024px;height:2px;background:#242424"></div>
<div class="a" style="left:34px;top:575px;width:245px;height:2px;background:#e2e0e0"></div>
<div class="a" style="left:629px;top:575px;width:34px;height:2px;background:#b06420"></div>
<div class="a" style="left:524px;top:575px;width:31px;height:2px;background:#555"></div>

</body></html>
